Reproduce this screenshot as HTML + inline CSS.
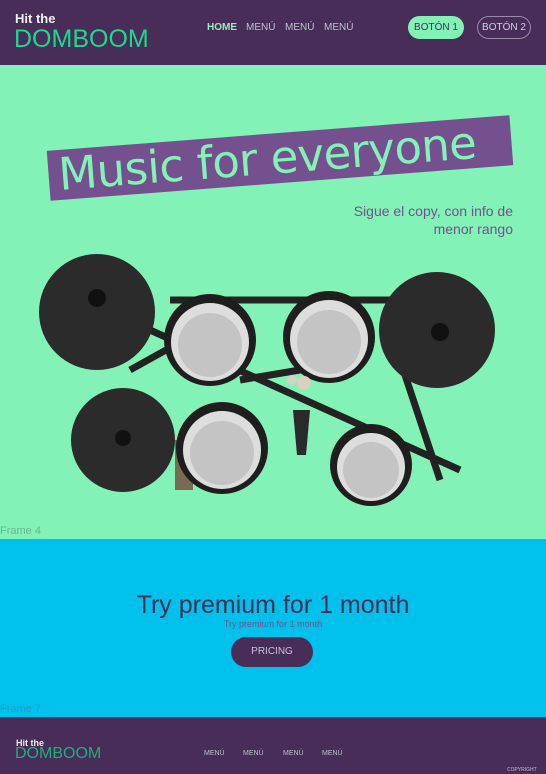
<!DOCTYPE html>
<html><head><meta charset="utf-8"><style>
*{margin:0;padding:0;box-sizing:border-box}
body{width:546px;height:774px;overflow:hidden;font-family:"Liberation Sans",sans-serif;position:relative;background:#82f2b6}
.hdr{position:absolute;left:0;top:0;width:546px;height:65px;background:#472d57}
.abs{position:absolute;white-space:nowrap}
.dom{color:#1ed88c;font-family:"DejaVu Sans ExtraLight","Liberation Sans",sans-serif;font-weight:200}
.btn{position:absolute;border-radius:12px;font-size:10px;line-height:12px;display:flex;align-items:center;justify-content:center}
</style></head><body>
<div class="hdr">
 <div class="abs" style="left:15px;top:11px;color:#f0f0f0;font-size:13px;font-weight:bold">Hit the</div>
 <div class="abs dom" style="left:14px;top:25px;font-size:25px">DOMBOOM</div>
 <div class="abs" style="left:207px;top:22px;font-size:10px;color:#9ae8c4;font-weight:bold">HOME</div>
 <div class="abs" style="left:246px;top:22px;font-size:10px;color:#c0c0d0">MENÚ</div>
 <div class="abs" style="left:285px;top:22px;font-size:10px;color:#c0c0d0">MENÚ</div>
 <div class="abs" style="left:324px;top:22px;font-size:10px;color:#c0c0d0">MENÚ</div>
 <div class="btn" style="left:408px;top:16px;width:56px;height:23px;background:#82f2b6;color:#472d57;padding-top:1px">BOTÓN 1</div>
 <div class="btn" style="left:477px;top:16px;width:54px;height:23px;border:1px solid #9a8aa8;color:#d0d0dc;padding-top:1px">BOTÓN 2</div>
</div>
<div class="abs" style="left:48px;top:133px;width:464px;height:50px;background:#75508f;transform:rotate(-4.4deg)">
 <div class="abs" style="left:10px;top:-3px;font-size:45px;line-height:56px;color:#82f2b6;font-family:'DejaVu Sans',sans-serif;letter-spacing:-0.6px">Music for everyone</div>
</div>
<div class="abs" style="right:33px;top:202px;font-size:14px;color:#75508f;text-align:right;line-height:18px">Sigue el copy, con info de<br>menor rango</div>
<svg class="abs" style="left:0;top:240px" width="546" height="300">
 <g stroke="#222" stroke-width="7" fill="none">
  <line x1="150" y1="90" x2="460" y2="230"/><line x1="400" y1="120" x2="440" y2="240"/>
  <line x1="130" y1="130" x2="220" y2="80"/><line x1="170" y1="60" x2="390" y2="60"/>
  <line x1="240" y1="140" x2="300" y2="130"/>
 </g>
 <polygon points="293,170 310,170 306,215 297,215" fill="#2a2a2a"/>
 <rect x="175" y="200" width="18" height="50" fill="#7a6a50"/>
 <circle cx="97" cy="72" r="58" fill="#2b2b2b"/><circle cx="97" cy="58" r="9" fill="#111"/>
 <circle cx="437" cy="90" r="58" fill="#2b2b2b"/><circle cx="440" cy="92" r="9" fill="#111"/>
 <circle cx="123" cy="200" r="52" fill="#2b2b2b"/><circle cx="123" cy="198" r="8" fill="#111"/>
 <g>
  <circle cx="210" cy="100" r="46" fill="#1e1e1e"/><circle cx="210" cy="102" r="39" fill="#ddd"/><circle cx="210" cy="105" r="32" fill="#c4c4c4"/>
  <circle cx="329" cy="97" r="46" fill="#1e1e1e"/><circle cx="329" cy="99" r="39" fill="#ddd"/><circle cx="329" cy="102" r="32" fill="#c4c4c4"/>
  <circle cx="222" cy="208" r="46" fill="#1e1e1e"/><circle cx="222" cy="210" r="39" fill="#ddd"/><circle cx="222" cy="213" r="32" fill="#c4c4c4"/>
  <circle cx="371" cy="225" r="41" fill="#1e1e1e"/><circle cx="371" cy="227" r="34" fill="#ddd"/><circle cx="371" cy="230" r="28" fill="#c4c4c4"/>
 </g>
 <circle cx="304" cy="143" r="7" fill="#d8d0c0"/><circle cx="292" cy="140" r="5" fill="#d8d0c0"/>
</svg>
<div class="abs" style="left:0;top:525px;font-size:11px;color:#6ab894">Frame 4</div>
<div class="abs" style="left:0;top:539px;width:546px;height:178px;background:#00c0ec"></div>
<div class="abs" style="left:0;width:546px;top:591px;text-align:center;font-size:25px;color:#472d57;font-family:'Liberation Sans',sans-serif">Try premium for 1 month</div>
<div class="abs" style="left:0;width:546px;top:619px;text-align:center;font-size:9px;color:#75508f">Try premium for 1 month</div>
<div class="abs" style="left:231px;top:637px;width:82px;height:30px;border-radius:15px;background:#472d57;color:#c8c0d8;font-size:10px;text-align:center;line-height:30px">PRICING</div>
<div class="abs" style="left:0;top:703px;font-size:11px;color:#1aa0c8">Frame 7</div>
<div class="abs" style="left:0;top:717px;width:546px;height:57px;background:#472d57"></div>
<div class="abs" style="left:16px;top:738px;font-size:9px;color:#eee;font-weight:bold">Hit the</div>
<div class="abs dom" style="left:15px;top:745px;font-size:16px;color:#1fae80">DOMBOOM</div>
<div class="abs" style="left:204px;top:750px;font-size:7px;color:#c0c0d0">MENÚ</div>
<div class="abs" style="left:243px;top:750px;font-size:7px;color:#c0c0d0">MENÚ</div>
<div class="abs" style="left:283px;top:750px;font-size:7px;color:#c0c0d0">MENÚ</div>
<div class="abs" style="left:322px;top:750px;font-size:7px;color:#c0c0d0">MENÚ</div>
<div class="abs" style="left:507px;top:767px;font-size:5px;color:#c0c0d0">COPYRIGHT</div>
</body></html>
